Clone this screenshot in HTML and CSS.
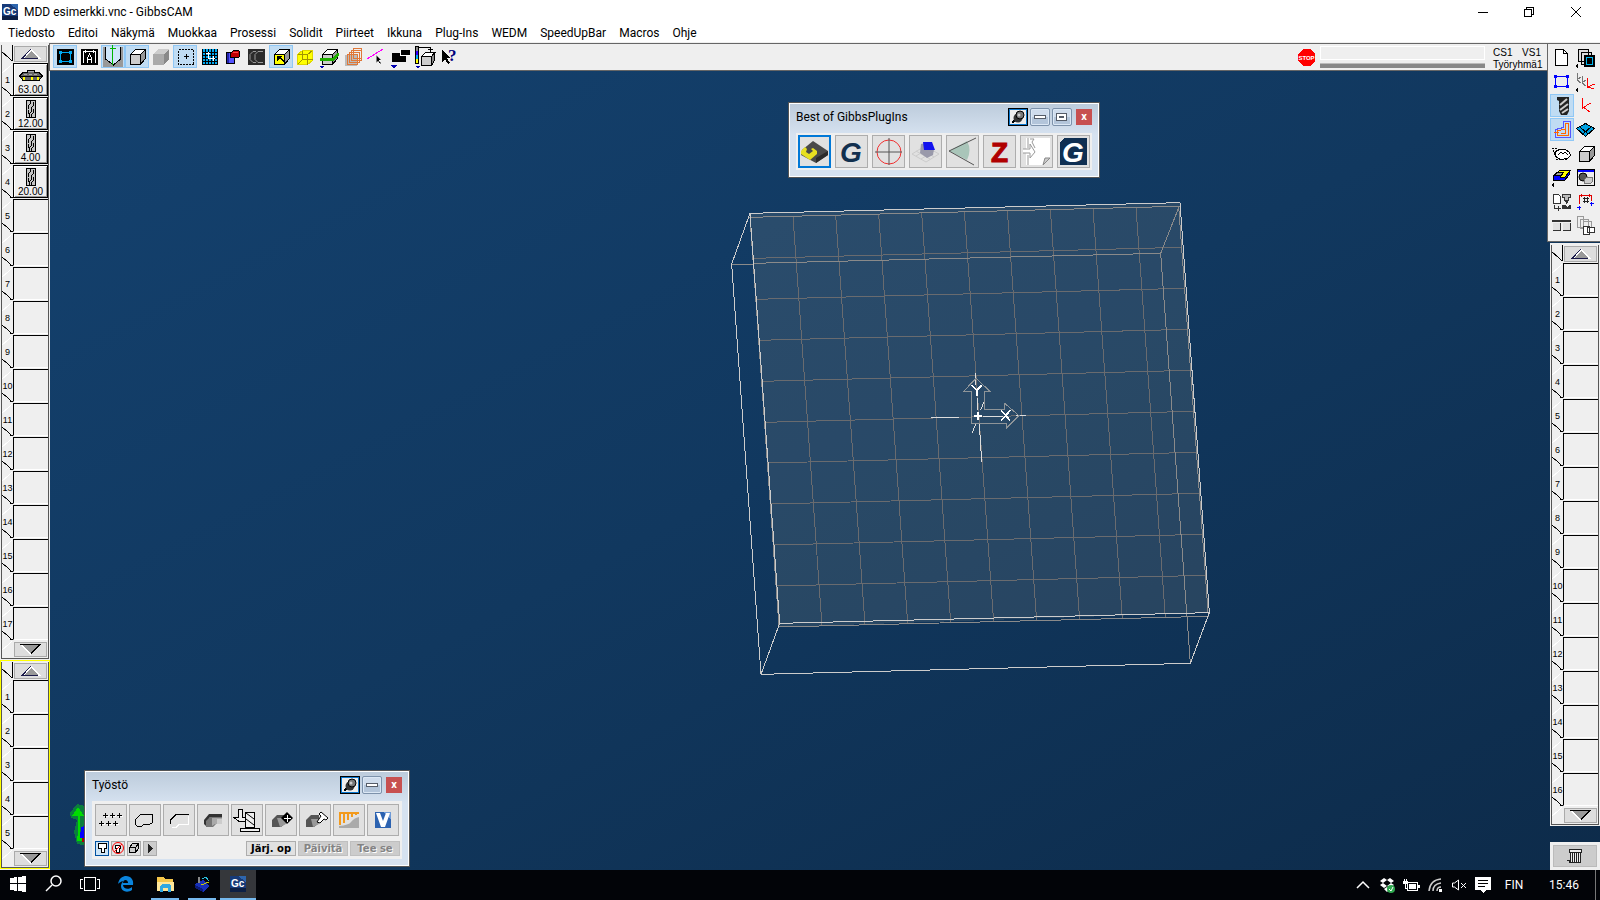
FILE: index.html
```html
<!DOCTYPE html>
<html lang="fi">
<head>
    <meta charset="UTF-8">
    <meta name="viewport" content="width=device-width, initial-scale=1.0">
    <title>MDD esimerkki.vnc - GibbsCAM</title>
    <link rel="stylesheet" href="styles.css">
</head>
<body>
    <!-- SHARED ICONS -->
    <svg class="sprite" aria-hidden="true">
      <symbol id="cube" viewBox="0 0 24 23">
        <path fill="#fff" stroke="#000" d="M5.500 9.500l5-5h10l-5 5z"/>
        <path fill="#999" stroke="#000" d="M15.500 9.500l5-5v9l-5 6z"/>
        <path fill="#ccc" stroke="#000" d="M5.500 9.500h10v10h-10z"/>
      </symbol>
      <symbol id="up" viewBox="0 0 20 11">
        <path fill="#fff" d="M10 0L0 10h20z"/>
        <path fill="#999" d="M10 2L3 9h14z"/>
        <path fill="none" stroke="#1b1b4a" d="M10 0L1 9.500h16"/>
      </symbol>
      <symbol id="down" viewBox="1 0 20 11">
        <path fill="#fff" d="M0 1h20L10 11z"/>
        <path fill="#999" d="M2 1h16l-8 8z"/>
        <path fill="none" stroke="#000" d="M0 .500h20L11 9.500"/>
      </symbol>
      <symbol id="facemill" viewBox="0 0 26 13">
        <path fill="#666" stroke="#000" d="M9.500 1.500h7v2h4l4 4-3 4h-17l-3-4 4-4h4z"/>
        <path stroke="#aaa" d="M10 2.500h6M6 5.500h3M11 5.500h3M16 5.500h3"/>
        <path stroke="#000" d="M1 7.500h24"/>
        <path fill="#ff0" d="M5 8h2v3H5zM13 8h2v3h-2zM19 8h2v3h-2z"/>
      </symbol>
      <symbol id="endmill" viewBox="0 0 10 18">
        <path fill="#c4c4c4" stroke="#000" d="M.500 .500h9v17h-9z"/>
        <path fill="none" stroke="#000" d="M4.500 1v2l-2 3v3M7.500 2v3l-2 3v3l-2 3v3M7.500 9v3l-2 3v2M2.500 10v4"/>
      </symbol>
      <symbol id="pin" viewBox="0 0 18 16">
        <path stroke="#000" stroke-width="2" d="M3 14l4-4"/>
        <circle class="smooth" cx="9" cy="9" r="4.500" fill="#333"/>
        <circle class="smooth" cx="11" cy="6" r="4" fill="#777" stroke="#000"/>
        <circle class="smooth" cx="10" cy="6" r="1.500" fill="#ccc"/>
      </symbol>
      <symbol id="gc" viewBox="0 0 16 16">
        <path fill="#173a78" d="M0 0h16v16H0z"/>
        <path fill="#2e66ad" d="M8 0h8v6z"/>
        <path fill="#0c1f44" d="M0 12h16v4H0z"/>
        <text x="1" y="11" class="gc-text">Gc</text>
      </symbol>
    </svg>

    <header class="titlebar">
      <svg class="titlebar__logo" width="16" height="16"><use href="#gc"/></svg>
      <h1 class="titlebar__title">MDD esimerkki.vnc - GibbsCAM</h1>
      <div class="titlebar__controls">
        <button class="titlebar__button" aria-label="Minimize"><svg width="12" height="12"><path d="M1 6.500h10"/></svg></button>
        <button class="titlebar__button" aria-label="Restore"><svg width="12" height="12"><path d="M1.500 3.500h7v7h-7zM3.500 3V1.500h7v7H9"/></svg></button>
        <button class="titlebar__button" aria-label="Close"><svg class="smooth" width="12" height="12"><path d="M1 1l10 10M11 1L1 11"/></svg></button>
      </div>
    </header>

    <nav class="menubar" aria-label="main menu">
      <button class="menubar__item">Tiedosto</button>
      <button class="menubar__item">Editoi</button>
      <button class="menubar__item">Näkymä</button>
      <button class="menubar__item">Muokkaa</button>
      <button class="menubar__item">Prosessi</button>
      <button class="menubar__item">Solidit</button>
      <button class="menubar__item">Piirteet</button>
      <button class="menubar__item">Ikkuna</button>
      <button class="menubar__item">Plug-Ins</button>
      <button class="menubar__item">WEDM</button>
      <button class="menubar__item">SpeedUpBar</button>
      <button class="menubar__item">Macros</button>
      <button class="menubar__item">Ohje</button>
    </nav>

    <div class="workspace">
      <!-- TOOLS AND OPERATIONS -->
      <aside class="side">
        <div class="list">
          <div class="list__inner">
            <div class="list__scroll list__scroll--up"><button class="list__arrow" aria-label="Up"><svg width="20" height="11"><use href="#up"/></svg></button></div>
            <ol class="list__tiles" data-count="17" data-tools="facemill:63.00 endmill:12.00 endmill:4.00 endmill:20.00"></ol>
            <div class="list__scroll list__scroll--down"><button class="list__arrow" aria-label="Down"><svg width="20" height="11"><use href="#down"/></svg></button></div>
          </div>
        </div>
        <div class="list list--active">
          <div class="list__inner">
            <div class="list__scroll list__scroll--up"><button class="list__arrow" aria-label="Up"><svg width="20" height="11"><use href="#up"/></svg></button></div>
            <ol class="list__tiles" data-count="5"></ol>
            <div class="list__scroll list__scroll--down"><button class="list__arrow" aria-label="Down"><svg width="20" height="11"><use href="#down"/></svg></button></div>
          </div>
        </div>
      </aside>

      <main class="center">
        <div class="toolbar">
          <button class="tool tool--on" aria-label="Workgroup"><svg viewBox="0 0 24 23"><path fill="#000" d="M4 4h17v16H4z"/><path fill="none" stroke="#00a8f0" d="M7.500 7.500h10v9h-10z"/><path fill="#00a8f0" d="M6 6h3v3H6zM16 6h3v3h-3zM6 15h3v3H6zM16 15h3v3h-3z"/></svg></button>
          <button class="tool" aria-label="Labels"><svg viewBox="0 0 24 23"><path fill="#000" d="M4 4h17v16H4z"/><path fill="none" stroke="#fff" d="M6.500 18V6.500h12V18M8.500 5v3M16.500 5v3M10.500 18v-5l2-4 2 4v5M10 14.500h5"/></svg></button>
          <button class="tool tool--on" aria-label="Tool view"><svg viewBox="0 0 24 23"><path fill="#999" d="M2 2h20v20H2z"/><path fill="#cfe6fa" stroke="#000" d="M4.500 2v12l8 6 7-6V2"/><path fill="none" stroke="#00b400" d="M11.500 0v20M9 3.500h6"/></svg></button>
          <button class="tool tool--on" aria-label="Stock"><svg><use href="#cube"/></svg></button>
          <button class="tool" aria-label="Shaded"><svg viewBox="0 0 24 23"><path fill="#ccc" d="M4 9l5-5h11l-5 5z"/><path fill="#888" d="M15 9l5-5v10l-5 6z"/><path fill="#aaa" d="M4 9h11v11H4z"/></svg></button>
          <button class="tool tool--on" aria-label="Selection"><svg viewBox="0 0 24 23"><path fill="none" stroke="#000" stroke-dasharray="2 1" d="M5.500 4.500h15v15h-15z"/><path stroke="#000" d="M11 11.500h5M13.500 9v5"/></svg></button>
          <button class="tool" aria-label="Grid"><svg viewBox="0 0 24 23"><path fill="#00a8f0" d="M5 4h16v16H5z"/><path stroke="#000" d="M5.500 4v16M8.500 4v16M11.500 4v16M14.500 4v16M17.500 4v16M20.500 4v16M5 7.500h16M5 10.500h16M5 13.500h16M5 16.500h16M5 19.500h16"/><path fill="none" stroke="#fff" d="M9 8.500h4M11.500 7v6.500h6M16.500 11v5"/></svg></button>
          <button class="tool" aria-label="Sheet"><svg viewBox="0 0 24 23"><path fill="#55f" stroke="#000" d="M5.500 7.500h8v11h-8z"/><path fill="#22a" d="M6 8h2v10H6z"/><path fill="#c00000" stroke="#000" d="M9.500 12.500v-4l3-3h5l1 1v5l-1 1z"/><path stroke="#f44" d="M12 7.500h5"/></svg></button>
          <button class="tool" aria-label="Section"><svg viewBox="0 0 24 23"><path fill="#2b2b2b" d="M3 4h17v16H3z"/><path class="smooth" fill="none" stroke="#999" d="M18 6.500h-5l-3 3v5l3 3h5M11 6.500H8l-3 3v5l3 3h3"/></svg></button>
          <button class="tool tool--on" aria-label="Faces"><svg viewBox="0 0 24 23"><use href="#cube"/><path fill="#ff0" stroke="#000" d="M5.500 9.500h10v10h-10z"/><path fill="#000" d="M8 11h5l-1 2 3 3-1 1-3-3-3 2z"/></svg></button>
          <button class="tool" aria-label="Wireframe"><svg viewBox="0 0 24 23"><path fill="#ff0" stroke="#e0d800" d="M4.500 9.500l5-4h10v10l-5 4h-10z"/><path fill="none" stroke="#a09400" d="M4.500 9.500h10v10M14.500 9.500l5-4M9.500 5.500v9h10M4.500 19.500l5-5"/></svg></button>
          <button class="tool" aria-label="Slice"><svg viewBox="0 0 24 23"><use href="#cube"/><path fill="#20b000" d="M3 13h12l6-5h1v3l-6 5H3z"/><path fill="#0000b0" d="M2 21h5l-2 3z"/></svg></button>
          <button class="tool" aria-label="Layers"><svg viewBox="0 0 24 23"><path fill="#bbb" d="M4 10h12v11H4z"/><path fill="none" stroke="#e07838" d="M6.500 9.500h10v10h-10zM8.500 7.500h10v10h-10zM10.500 5.500h10v10h-10zM12.500 3.500h8v10h-8z"/></svg></button>
          <button class="tool" aria-label="Edge"><svg viewBox="0 0 24 23"><path stroke="#f0f" d="M2 14L18 4"/><path fill="#000" stroke="#fff" stroke-width=".500" d="M11 10l5 5h-2l2 3-1 1-2-3-2 2z"/></svg></button>
          <button class="tool" aria-label="Bodies"><svg viewBox="0 0 24 23"><path fill="#000" d="M3 8h8v1h6v8H3zM12 5h9v5h-9z"/><path fill="none" stroke="#fff" d="M11.500 4v6.500H21"/><path fill="#0000b0" d="M1 20h7l-3 4z"/></svg></button>
          <button class="tool" aria-label="Colours"><svg viewBox="0 0 24 23"><path fill="#888" stroke="#000" d="M2.500 1.500h3v17h-3z"/><path fill="#30f" d="M3 6h2v4H3z"/><path fill="#00b0f0" d="M3 10h2v4H3z"/><path fill="#ff0" d="M3 14h2v4H3z"/><path fill="none" stroke="#000" d="M6 2.500h11v4M15 4.500h5"/><path fill="#fff" stroke="#000" d="M8.500 11.500l4-4h10l-4 4z"/><path fill="#888" stroke="#000" d="M18.500 11.500l3-4v8l-3 5z"/><path fill="#ccc" stroke="#000" d="M8.500 11.500h10v9h-10z"/><path fill="#0000b0" d="M2 21h5l-2 3z"/></svg></button>
          <button class="tool" aria-label="Help"><svg viewBox="0 0 24 23"><path fill="#000" d="M5 4l8 9h-3l3 5-2 1-3-5-3 3z"/><text x="11" y="16" class="help-mark">?</text></svg></button>

          <div class="status">
            <button class="status__stop" aria-label="STOP"><svg width="17" height="17" viewBox="0 0 17 17"><path fill="#f00" d="M5 0h7l5 5v7l-5 5H5l-5-5V5z"/><text x="8.500" y="11" text-anchor="middle" class="stop-text">STOP</text></svg></button>
            <div class="status__bars">
              <div class="status__field"></div>
              <div class="status__line"></div>
            </div>
            <div class="status__labels">
              <span>CS1</span><span class="status__set">VS1</span>
              <span class="status__group">Työryhmä1</span>
            </div>
          </div>
        </div>

        <div class="stage">
          <svg class="stage__part" viewBox="0 0 1500 1500" width="500" height="500">
            <path class="part__face" d="M90 70L1380 38L1468 1268L177 1311z"/>
            <path class="part__grid" d="M219 79L306 1308M347 75L435 1305M476 72L563 1301M605 69L692 1298M733 66L821 1295M862 62L950 1292M991 59L1079 1289M1119 56L1207 1285M1248 52L1336 1282
              M99 205L1385 172M107 328L1394 295M116 451L1403 418M125 574L1412 541M134 697L1421 664M142 819L1429 787M151 942L1438 910M160 1065L1447 1033M168 1188L1456 1156"/>
            <path class="part__hidden" d="M90 82L1376 49L1465 1279L177 1311zM100 220L1322 190L1411 1420M1378 48L1322 190M35 223H100"/>
            <path class="part__edge" d="M90 70L1380 38L1468 1268L179 1300zM90 70L35 222L123 1453L1411 1420L1468 1268M179 1300L123 1453"/>
            <path class="part__axes" d="M633 682H717M888 677H918M766 548L768 585M772 625V660M778 700L785 815M792 635L782 660M768 700L757 728M790 680H850"/>
            <path class="part__arrows" d="M755 700V604H731L768 565L810 604H794V658H854V640L897 677L858 716V700z"/>
            <path class="part__origin" d="M762 678H787M775 666V690"/>
            <path class="part__letter" d="M755 586L770 601L785 586M770 600V618M843 661L871 692M871 661L843 692"/>
          </svg>

          <svg class="stage__gnomon" width="26" height="46">
            <path fill="#0f0" opacity=".35" d="M1 10L8 1l8 2 4 12-3 5 7 14-4 9-12-2-3-12 3-12-6-2z"/>
            <path fill="#0d0" d="M3 13l6-9 6 9h-4v15l5 10H8l1-10V13z"/>
            <path fill="#00f" d="M12 24l8-2v16l-9-3z"/>
            <path fill="#a00" d="M13 35h7v4h-7z"/>
          </svg>

          <section class="palette palette--plugins">
            <header class="palette__head">
              <h2 class="palette__title">Best of GibbsPlugIns</h2>
              <button class="palette__pin" aria-label="Pin"><svg width="18" height="16"><use href="#pin"/></svg></button>
              <button class="palette__control" aria-label="Minimize"><svg width="12" height="8"><path d="M.500 2.500h11v3H.500z"/></svg></button>
              <button class="palette__control" aria-label="Maximize"><svg width="12" height="8"><path d="M.500 .500h10v7H.500zM3.500 3.500h4v1h-4z"/></svg></button>
              <button class="palette__close" aria-label="Close">x</button>
            </header>
            <div class="palette__body palette__row">
              <button class="plugin plugin--on" aria-label="Pocket"><svg class="smooth" viewBox="0 0 33 33"><path fill="#4a4a4a" d="M4 15L15 6l15 10v4L18 28 3 20z"/><path fill="#2b2b2b" d="M18 23l12-7v4l-12 8z"/><path fill="#e8e020" d="M3 16l4-4 2 2-1 3 3 2 4-3-2-2 2-1 4 3v3l-7 6-9-6z"/></svg></button>
              <button class="plugin" aria-label="Gibbs"><svg viewBox="0 0 33 33"><text x="5" y="27" class="g-text">G</text></svg></button>
              <button class="plugin" aria-label="Target"><svg class="smooth" viewBox="0 0 33 33"><circle cx="17" cy="17" r="12" fill="none" stroke="#f03030"/><path stroke="#555" d="M3 17h27M17 3v27"/></svg></button>
              <button class="plugin" aria-label="Part cube"><svg class="smooth" viewBox="0 0 33 33"><path fill="none" stroke="#ccc" d="M3 19l13-8 14 8-13 8zM7 16l14 8M12 14l13 8M7 21l13-8M12 24l13-8"/><path fill="#99a" d="M12 9l-1 9 7 5 6-3 1-6-3-7z"/><path fill="#11e" d="M14 7h9l3 8h-11z"/></svg></button>
              <button class="plugin" aria-label="Angle"><svg class="smooth" viewBox="0 0 33 33"><path fill="#a9c5b9" d="M3 16L21 6q5 9 0 19z"/><path fill="none" stroke="#555" d="M30 3L3 16l25 14"/></svg></button>
              <button class="plugin" aria-label="Z"><svg viewBox="0 0 33 33"><text x="8" y="27" class="z-text">Z</text></svg></button>
              <button class="plugin" aria-label="Sheet arrows"><svg class="smooth" viewBox="0 0 33 33"><path fill="#fff" d="M6 3h24v20l-7 7H6z"/><path fill="#ccc" stroke="#888" d="M30 23h-5l-2 7z"/><path fill="#fff" stroke="#999" d="M8 3v10M8 20v10M3 14h7V9l5 8-5 6v-5H3M10 4h4l-2 3 3 6"/></svg></button>
              <button class="plugin" aria-label="Gibbs large"><svg viewBox="0 0 33 33"><path fill="#0f2f52" d="M7 3h23v27H3V7z"/><text x="5" y="27" class="g-text g-text--white">G</text></svg></button>
            </div>
          </section>

          <section class="palette palette--machining">
            <header class="palette__head">
              <h2 class="palette__title">Työstö</h2>
              <button class="palette__pin" aria-label="Pin"><svg width="18" height="16"><use href="#pin"/></svg></button>
              <button class="palette__control" aria-label="Minimize"><svg width="12" height="8"><path d="M.500 2.500h11v3H.500z"/></svg></button>
              <button class="palette__close" aria-label="Close">x</button>
            </header>
            <div class="palette__body">
              <div class="palette__row palette__row--tight">
                <button class="plugin" aria-label="Holes"><svg viewBox="0 0 32 32"><path stroke="#fff" d="M9 12.500h5M16 12.500h5M23 12.500h5M5 20.500h5M12 20.500h5M19 20.500h5"/><path stroke="#000" d="M8 11.500h5M10.500 9v5M15 11.500h5M17.500 9v5M22 11.500h5M24.500 9v5M4 19.500h5M6.500 17v5M11 19.500h5M13.500 17v5M18 19.500h5M20.500 17v5"/></svg></button>
                <button class="plugin" aria-label="Contour"><svg viewBox="0 0 32 32"><path fill="none" stroke="#000" d="M6.500 15.500l5-5h12v8l-3 2h-6l-2 2h-4l-2-2z"/></svg></button>
                <button class="plugin" aria-label="Edge contour"><svg viewBox="0 0 32 32"><path fill="none" stroke="#fff" d="M25.500 12v8h-9l-3 3h-5"/><path fill="none" stroke="#000" d="M7.500 20v-4l6-6h12"/></svg></button>
                <button class="plugin" aria-label="Pocketing"><svg class="smooth" viewBox="0 0 32 32"><path fill="#333" d="M7 16l5-6h13v3H13l-4 9-2-2z"/><path fill="#777" d="M9 17l4-4h12v7h-6l-3 3H9z"/><path fill="#aaa" d="M15 14h10v6h-7l-3 2z"/><path fill="#ccc" d="M20 15h5v5h-5z"/></svg></button>
                <button class="plugin" aria-label="Thread"><svg viewBox="0 0 32 32"><path fill="#eee" stroke="#000" d="M7.500 5.500h4v8h3v4H8l-5-4h4.500zM14.500 8.500h9v15h-9zM9.500 24.500h19v3h-19z"/><path class="smooth" stroke="#000" d="M15 9l8 6M15 15l8 6"/></svg></button>
                <button class="plugin" aria-label="Move"><svg class="smooth" viewBox="0 0 32 32"><path fill="#555" d="M7 16l5-5h9v8l-5 4H7z"/><path fill="#999" d="M12 14h9v6l-6 3z"/><path fill="#000" d="M22 8l6 6-6 6-6-6z"/><path stroke="#fff" d="M19 14.500h7M22.500 11v7"/></svg></button>
                <button class="plugin" aria-label="Mill"><svg class="smooth" viewBox="0 0 32 32"><path fill="#555" d="M7 16l5-5h8v8l-5 4H7z"/><path fill="#999" d="M12 15h8v5l-6 3z"/><path fill="#fff" stroke="#000" d="M18 18l4-6-2-2 2-2 7 6-2 2-2-1-4 4z"/></svg></button>
                <button class="plugin" aria-label="Surface"><svg viewBox="0 0 32 32"><path class="smooth" fill="#aaa" d="M6 24v-2q10-1 12-4 3-4 8-5v11z"/><path stroke="#f39a1c" stroke-width="2" d="M7 8v13M11 8v11M15 8v8M19 8v5M23 8v3M6 9h20"/></svg></button>
                <button class="plugin" aria-label="VoluMill"><svg viewBox="0 0 32 32"><path fill="#2c62b0" d="M8 8h16v16H8z"/><path fill="#6f9bd8" d="M16 8h8v8z"/><path class="smooth" fill="#fff" d="M9 9h4l3 8 3-8h4l-5 14h-4z"/></svg></button>
              </div>
              <div class="palette__row palette__row--actions">
                <button class="mini mini--on" aria-label="Holder"><svg viewBox="0 0 14 15"><path fill="#fff" stroke="#000" d="M3.500 2.500h8v5h-2v4h-3v-4h-3z"/></svg></button>
                <button class="mini" aria-label="No holder"><svg viewBox="0 0 14 15"><path fill="#fff" stroke="#000" d="M4.500 4.500h5v3h-1v4h-3v-4h-1z"/><circle class="smooth" cx="7" cy="7" r="5.500" fill="none" stroke="#f00"/><path class="smooth" stroke="#f00" d="M3 11l8-8"/></svg></button>
                <button class="mini" aria-label="Solid"><svg viewBox="0 0 14 15"><path fill="#ccc" stroke="#000" d="M2.500 6.500l3-4h6v5l-3 4h-6zM2.500 6.500h6v5M8.500 6.500l3-4"/></svg></button>
                <button class="mini mini--dark" aria-label="More"><svg viewBox="0 0 14 15"><path fill="#222" d="M5 3v9l5-4.500z"/></svg></button>
                <span class="palette__spacer"></span>
                <button class="action">Järj. op</button>
                <button class="action" disabled>Päivitä</button>
                <button class="action" disabled>Tee se</button>
              </div>
            </div>
          </section>
        </div>
      </main>

      <aside class="side side--right">
        <div class="tools">
          <button class="tool" aria-label="New"><svg viewBox="0 0 24 23"><path fill="#fff" stroke="#000" d="M5.500 3.500h8l4 4v12h-12z"/><path fill="none" stroke="#000" d="M13.500 3.500v4h4"/></svg></button>
          <button class="tool" aria-label="Workgroups"><svg viewBox="0 0 24 23"><path fill="#ddd" stroke="#000" d="M4.500 3.500h10v12h-10zM7.500 6.500h10v12h-10z"/><path fill="#000" d="M10 9h11v12H10z"/><path fill="none" stroke="#00b8f0" d="M12.500 11.500h6v7h-6z"/><path fill="#000" d="M1 20l3-3v6z"/></svg></button>
          <button class="tool" aria-label="Geometry"><svg viewBox="0 0 24 23"><path fill="none" stroke="#00f" d="M5.500 6.500h12v10h-12z"/><path fill="#00f" d="M4 5h3v3H4zM16 5h3v3h-3zM4 15h3v3H4zM16 15h3v3h-3z"/></svg></button>
          <button class="tool" aria-label="Coordinate systems"><svg viewBox="0 0 24 23"><path fill="none" stroke="#777" d="M3.500 3v7l3 3M4 9l3-2M8.500 6v7l3 3M9 12l3-2"/><path fill="none" stroke="#f00" d="M13.500 8v9l7-3M14 17l6 2"/><path fill="#000" d="M1 20l3-3v6z"/></svg></button>
          <button class="tool tool--on" aria-label="Tool"><svg class="smooth" viewBox="0 0 24 23"><path fill="#222" d="M7 3h12v14l-2 4h-6l-2-4V7L7 6z"/><path stroke="#ccc" stroke-width="2" d="M10 11l7-6M10 16l8-6M12 19l6-4"/></svg></button>
          <button class="tool" aria-label="CS"><svg viewBox="0 0 24 23"><path fill="none" stroke="#f00" d="M8.500 4v10l8-5M9 13l7 5"/></svg></button>
          <button class="tool tool--on" aria-label="Machining"><svg viewBox="0 0 24 23"><path fill="none" stroke="#55f" d="M5.500 11.500l8-2v-6h7v16h-15z"/><path fill="none" stroke="#f60" d="M4 14.500h5M7.500 17.500v-5l8-1v-6h3v12zM10.500 15.500h5v-6"/></svg></button>
          <button class="tool" aria-label="Surfaces"><svg viewBox="0 0 24 23"><path fill="#00a0e0" stroke="#000" d="M2.500 10.500l9-5 9 5-9 8z"/><path fill="none" stroke="#000" d="M6 9l8 7M17 9l-8 7"/></svg></button>
          <button class="tool" aria-label="Render"><svg viewBox="0 0 24 23"><path fill="#fff" stroke="#000" d="M5.500 9.500l4-2h6l4 3 1 3-3 3-6 1-5-2-2-4z"/><path fill="none" stroke="#000" stroke-dasharray="2 1" d="M2 6.500h5l3 2M3 8l3 4M6 17.500h12"/><path fill="none" stroke="#000" d="M8 13l3-3 2 2 2-2 3 3"/></svg></button>
          <button class="tool" aria-label="Solids"><svg><use href="#cube"/></svg></button>
          <button class="tool" aria-label="Sheets"><svg viewBox="0 0 24 23"><path fill="#ff0" stroke="#000" d="M3.500 9.500l6-5h11l-6 7h-5z"/><path fill="#999" stroke="#000" d="M3.500 9.500l4-3h6l-3 4z"/><path fill="#00f" stroke="#000" d="M3.500 9.500h7v2h4l5-6v3l-5 6h-11z"/><path fill="#000" d="M1 19l3-3v6z"/></svg></button>
          <button class="tool" aria-label="Simulation"><svg viewBox="0 0 24 23"><path fill="#eee" stroke="#000" d="M3.500 3.500h17v16h-17z"/><path fill="#00f" d="M4 4h16v2H4z"/><circle class="smooth" cx="9" cy="11" r="4" fill="#555" stroke="#000"/><path fill="#ccc" stroke="#777" d="M10.500 13.500l2-2h6v4l-2 2h-6z"/></svg></button>
          <button class="tool" aria-label="Post"><svg viewBox="0 0 24 23"><path fill="#fff" stroke="#333" d="M3.500 4.500h5l2 2v7h-7z"/><path fill="none" stroke="#333" d="M4.500 15v3h6M8.500 16v5"/><path fill="#bbb" stroke="#333" d="M12.500 4.500h8v3h-2v3h-4v-3h-2z"/><path fill="#333" d="M12 15h3l2 2 2-2h2v4h-9zM15 11h3l-1 4z"/></svg></button>
          <button class="tool" aria-label="Numbering"><svg viewBox="0 0 24 23"><path fill="none" stroke="#e00000" d="M5.500 14V5.500h12V11M7.500 4v3M15.500 4v3"/><path stroke="#222" d="M9 8.500h6M9 11.500h6M10.500 7v6M13.500 7v6"/><path stroke="#00f" d="M3 17.500h4M5.500 16v4M16 13.500h4M17.500 12v4"/></svg></button>
          <button class="tool" aria-label="Compare"><svg viewBox="0 0 24 23"><path fill="#e0e0e0" d="M3 9h8v7H3zM13 9h8v7h-8z"/><path fill="none" stroke="#333" d="M3 16.500h7.500V9M13 16.500h7.500V9M2 7.500h19"/><path stroke="#333" d="M2 6.500h19"/></svg></button>
          <button class="tool" aria-label="Copies"><svg viewBox="0 0 24 23"><path fill="#eee" stroke="#999" d="M3.500 2.500h6v11h-6zM6.500 5.500h8v9h-8zM9.500 7.500h8v9h-8z"/><path fill="#fff" stroke="#333" d="M9.500 12.500h6v8h-6zM13.500 13.500h7v5h-7z"/></svg></button>
        </div>
        <div class="list">
          <div class="list__inner">
            <div class="list__scroll list__scroll--up"><button class="list__arrow" aria-label="Up"><svg width="20" height="11"><use href="#up"/></svg></button></div>
            <ol class="list__tiles" data-count="16"></ol>
            <div class="list__scroll list__scroll--down"><button class="list__arrow" aria-label="Down"><svg width="20" height="11"><use href="#down"/></svg></button></div>
          </div>
        </div>
        <div class="trash">
          <button class="trash__button" aria-label="Trash"><svg width="16" height="15"><path fill="#eee" stroke="#222" d="M3.500 3.500h10v10h-10zM2.500 .500h12v3h-12z"/><path fill="none" stroke="#222" d="M5.500 4v9M7.500 4v9M9.500 4v9M11.500 4v9M0 11.500h2v2h2"/></svg></button>
        </div>
      </aside>
    </div>

    <!-- TASKBAR -->
    <footer class="taskbar">
      <button class="task" aria-label="Start"><svg width="16" height="16"><path fill="#fff" d="M0 2l7-1v6H0zM8 1l8-1v7H8zM0 8h7v7l-7-1zM8 8h8v8l-8-1z"/></svg></button>
      <button class="task" aria-label="Search"><svg class="smooth" width="18" height="18"><circle cx="11" cy="6" r="5" fill="none" stroke="#fff" stroke-width="1.500"/><path stroke="#fff" stroke-width="1.500" d="M7 10l-6 6"/></svg></button>
      <button class="task" aria-label="Task view"><svg width="20" height="16"><path fill="none" stroke="#fff" d="M4.500 1.500h11v13h-11zM3 3.500H.500v9H3M17 3.500h2.500v9H17"/></svg></button>
      <button class="task" aria-label="Edge"><svg class="smooth" width="16" height="16"><path fill="#0a84dc" d="M0 8C1 2 5 0 8 0c5 0 8 4 7 9H5c0 4 6 5 9 2v3c-4 3-11 2-11-4 0-2 1-4 3-5-3 0-5 2-6 3zm5-1h5c0-4-5-4-5 0z"/></svg></button>
      <button class="task task--open" aria-label="Explorer"><svg width="17" height="15"><path fill="#f5c64a" d="M0 0h6l2 2h8v12H0z"/><path fill="#ffe79a" d="M0 5h17v9H0z"/><path fill="#30a8e0" d="M3 9l2-2h7l2 2v6h-3v-4H6v4H3z"/></svg></button>
      <button class="task task--open" aria-label="Control"><svg width="17" height="16"><path fill="#1630b8" d="M1 8l8-4 7 6-7 6-8-4z"/><path fill="#0a1a78" d="M1 9l8 4v3l-8-4z"/><path stroke="#c8c800" d="M7 9l8-3"/><path stroke="#888" stroke-width="2" d="M5 1v6"/><path fill="none" stroke="#28c0e0" d="M8 3l4-2 3 4"/></svg></button>
      <button class="task task--current" aria-label="GibbsCAM"><svg width="16" height="16"><use href="#gc"/></svg></button>

      <div class="tray">
        <button class="tray__item" aria-label="Show hidden"><svg class="smooth" width="14" height="8"><path fill="none" stroke="#fff" stroke-width="1.500" d="M1 7l6-6 6 6"/></svg></button>
        <button class="tray__item" aria-label="Dropbox"><svg class="smooth" width="15" height="15"><path fill="#fff" d="M4 0l3 2-4 3-3-2zM10 0l4 3-3 2-4-3zM3 5l4 3-3 2-4-3zM11 5l3 2-4 3-3-2zM4 11l3-2 3 2-3 3z"/><circle cx="11" cy="11" r="4" fill="#2fa84f"/><path fill="none" stroke="#fff" d="M9 11l2 2 2-4"/></svg></button>
        <button class="tray__item" aria-label="Battery"><svg width="17" height="13"><path fill="none" stroke="#fff" d="M4.500 3.500h10v8h-10zM1.500 0v3M3.500 0v3M2.500 5v4h2"/><path fill="#fff" d="M0 2h5v3H0zM6 5h7v5H6zM15 6h2v3h-2z"/></svg></button>
        <button class="tray__item" aria-label="Network"><svg class="smooth" width="14" height="14"><path fill="none" stroke="#ccc" stroke-width="1.500" d="M1 13Q2 2 13 1M5 13q0-7 8-8M9 13q0-4 4-4"/><path fill="#fff" d="M11 11h3v3h-3z"/></svg></button>
        <button class="tray__item" aria-label="Volume"><svg class="smooth" width="15" height="12"><path fill="none" stroke="#fff" d="M.500 4h2l4-3v10l-4-3h-2zM9 4l5 5M14 4L9 9"/></svg></button>
        <button class="tray__item" aria-label="Notifications"><svg width="16" height="16"><path fill="#fff" d="M0 0h16v13h-5l-3 3-3-3H0z"/><path stroke="#000" d="M3 3.500h10M3 6.500h10M3 9.500h7"/></svg></button>
        <button class="tray__text">FIN</button>
        <button class="tray__text tray__text--clock">15:46</button>
      </div>
    </footer>

    <script>
        // BUILD NUMBERED TILES
        document.querySelectorAll('.list__tiles').forEach(list => {
            const tools = (list.dataset.tools || '').split(' ').filter(Boolean);

            for (let i = 0; i < Number(list.dataset.count); i++) {
                const tile = document.createElement('li');
                tile.className = 'tile';
                tile.innerHTML = `<span class="tile__tab">${i + 1}</span><button class="tile__box" aria-label="${i + 1}"></button>`;

                if (tools[i]) {
                    const [icon, size] = tools[i].split(':');
                    const box = tile.querySelector('.tile__box');
                    box.classList.add('tile__box--tool');
                    box.innerHTML = `<svg class="tile__icon"><use href="#${icon}"/></svg><span>${size}</span>`;
                }
                list.append(tile);
            }
        });
    </script>
</body>
</html>
```
FILE: styles.css
```css
:root {
    --panel: #efefef;
    --line: #666;
    --on-bg: #c0dcf3;
    --on-border: #90c8f6;
    --ui-font: Roboto, "Open Sans", sans-serif;
    --small-font: "Liberation Sans", Arial, sans-serif;
}

* {
    box-sizing: border-box;
}

body {
    margin: 0;
    height: 100vh;
    display: flex;
    flex-direction: column;
    overflow: hidden;
    background-color: white;
    color: black;
    font-family: var(--ui-font);
    font-size: 12px;
}

button {
    margin: 0;
    padding: 0;
    border: 0;
    background: transparent;
    color: inherit;
    font: inherit;
}

svg {
    display: block;
    overflow: visible;
    shape-rendering: crispEdges;
}
symbol {
    overflow: visible;
}
.smooth {
    shape-rendering: auto;
}
.sprite {
    position: absolute;
    width: 0;
    height: 0;
}

/* svg lettering */
.gc-text {
    font: bold 10px var(--small-font);
    fill: white;
}
.help-mark {
    font: bold 17px "Liberation Serif", serif;
    fill: #00007c;
}
.stop-text {
    font: bold 6px var(--small-font);
    fill: white;
}
.g-text {
    font: italic bold 28px var(--small-font);
    fill: #12304f;
}
.g-text--white {
    fill: white;
}
.z-text {
    font: bold 28px var(--small-font);
    fill: #b00000;
    stroke: #b00000;
}

.titlebar {
    display: flex;
    align-items: center;
    height: 23px;
    padding-left: 2px;
}
.titlebar__title {
    margin: 0 0 0 6px;
    font-size: 12px;
    font-weight: normal;
}
.titlebar__controls {
    display: flex;
    margin-left: auto;
}
.titlebar__button {
    display: flex;
    align-items: center;
    justify-content: center;
    width: 46px;
    height: 22px;
    fill: none;
    stroke: black;
}
.titlebar__button:last-child {
    width: 48px;
}

.menubar {
    display: flex;
    gap: 1px;
    height: 20px;
    padding: 0 2px;
    border-bottom: 1px solid var(--panel);
}
.menubar__item {
    padding: 0 6px;
}
.menubar__item:hover {
    background-color: var(--on-bg);
}

.workspace {
    flex: 1;
    min-height: 0;
    display: flex;
    background: linear-gradient(to bottom right, #144270 0%, #11385f 50%, #0d2b4a 100%);
}

.side {
    display: flex;
    flex-direction: column;
    align-items: flex-end;
    background-color: var(--panel);
}
.side--right {
    gap: 1px;
    background-color: transparent;
}

/* numbered lists */
.list {
    width: 50px;
    padding-top: 1px;
    border: 1px solid var(--panel);
    background-color: var(--panel);
}
.list--active {
    border-color: #ff0;
}
.list__inner {
    border: 1px solid #555;
    border-top: 0;
}
.list__scroll {
    display: flex;
    justify-content: flex-end;
    padding: 1px;
}
.list__scroll--up {
    height: 18px;
    background:
        linear-gradient(to top right, transparent 47%, #000 48%, #000 54%, transparent 55%) 0 7px / 10px 9px no-repeat,
        linear-gradient(#000, #000) 10px 0 / 1px 16px no-repeat;
}
.list__scroll--down {
    height: 17px;
    background: linear-gradient(to bottom right, transparent 47%, #fff 48%, #fff 54%, transparent 55%) 0 0 / 10px 9px no-repeat;
}
.list__arrow {
    display: flex;
    align-items: center;
    justify-content: center;
    width: 33px;
    border: 1px solid #aaa;
    background-color: #ddd;
}
.list__tiles {
    margin: 0;
    padding: 0;
    list-style: none;
}

.tile {
    display: flex;
    height: 34px;
}
.tile__tab {
    display: flex;
    align-items: center;
    justify-content: center;
    width: 11px;
    padding-bottom: 1px;
    font: 9px var(--small-font);
    background:
        linear-gradient(to bottom right, transparent 47%, #fff 48%, #fff 54%, transparent 55%) 0 1px / 10px 9px no-repeat,
        linear-gradient(to top right, transparent 47%, #000 48%, #000 54%, transparent 55%) 0 24px / 9px 8px no-repeat,
        linear-gradient(#000, #000) 8px 32px / 3px 1px no-repeat;
}
.tile__box {
    display: flex;
    flex-direction: column;
    align-items: center;
    justify-content: flex-end;
    flex: 1;
    margin-bottom: 1px;
    border-top: 1px solid #000;
    border-left: 1px solid #000;
    border-bottom: 1px solid #fff;
    font: 10px/11px var(--small-font);
}
.tile__box--tool {
    border: 1px solid #000;
    box-shadow: inset 1px 1px #fff, inset -1px -1px #999;
}
.tile__icon {
    width: 26px;
    height: 18px;
}

.center {
    flex: 1;
    min-width: 0;
    display: flex;
    flex-direction: column;
}

.toolbar {
    display: flex;
    height: 28px;
    margin-left: -1px;
    padding: 1px 0 0 3px;
    border: 1px solid var(--line);
    border-width: 1px 0 1px 1px;
    background-color: var(--panel);
}
.tool {
    width: 24px;
    height: 23px;
    border: 1px solid transparent;
}
.tool svg {
    width: 24px;
    height: 23px;
    margin: -1px;
}
.tool--on {
    border-color: var(--on-border);
    background-color: var(--on-bg);
}

.status {
    display: flex;
    align-items: flex-start;
    margin-left: auto;
}
.status__stop {
    margin: 4px 5px 0 0;
}
.status__bars {
    width: 165px;
    margin-top: 1px;
}
.status__field {
    height: 14px;
    border: 1px solid white;
}
.status__line {
    height: 5px;
    margin-top: 3px;
    border-top: 1px solid #bbb;
    background-color: #888;
}
.status__labels {
    display: grid;
    grid-template-columns: 1fr 1fr;
    width: 48px;
    margin: 2px 6px 0 8px;
    font: 10px/12px var(--small-font);
}
.status__set {
    text-align: right;
}
.status__group {
    grid-column: span 2;
}

.stage {
    flex: 1;
    position: relative;
    overflow: hidden;
}
.stage__part {
    position: absolute;
    left: 670px;
    top: 119px;
    fill: none;
    stroke-width: 3;
}
.part__face {
    fill: rgba(140, 145, 140, 0.2);
}
.part__grid {
    stroke: #696b6f;
}
.part__hidden {
    stroke: #8a8a8a;
}
.part__edge {
    stroke: #ccc;
}
.part__axes {
    stroke: #ddd;
}
.part__arrows {
    stroke: #8e9498;
}
.part__origin {
    stroke: white;
    stroke-width: 6;
}
.part__letter {
    stroke: white;
    stroke-width: 5;
}
.stage__gnomon {
    position: absolute;
    left: 19px;
    bottom: 21px;
}

/* floating palettes */
.palette {
    position: absolute;
    padding: 2px 7px 7px;
    border: 1px solid #555;
    box-shadow: inset 0 0 0 1px #fff;
    background: linear-gradient(#bccbdb, #d6e2f0 32px);
}
.palette--plugins {
    left: 738px;
    top: 31px;
}
.palette--machining {
    left: 34px;
    bottom: 3px;
}
.palette__head {
    display: flex;
    align-items: center;
    gap: 2px;
    height: 24px;
    margin-bottom: 4px;
}
.palette__title {
    flex: 1;
    margin: 0;
    font-size: 12px;
    font-weight: normal;
}
.palette__pin {
    width: 20px;
    height: 18px;
    border: 1px solid #000;
    outline: 1px solid #0a78d0;
    outline-offset: -2px;
    background-color: #eee;
}
.palette__control {
    display: flex;
    align-items: center;
    justify-content: center;
    width: 20px;
    height: 18px;
    border: 1px solid #7d92ab;
    border-radius: 2px;
    background: linear-gradient(#cfdcec 50%, #b3c5da 50%);
    box-shadow: inset 0 0 0 1px #dce8f5;
    fill: #fff;
    stroke: #555c68;
}
.palette__close {
    width: 16px;
    height: 16px;
    margin-left: 2px;
    background-color: #c75050;
    color: white;
    font: bold 11px/12px var(--ui-font);
}
.palette__body {
    padding: 2px;
    background-color: var(--panel);
}
.palette__row {
    display: flex;
    gap: 4px;
}
.palette__row--tight {
    gap: 2px;
    padding: 1px;
}
.palette__row--actions {
    gap: 2px;
    padding: 4px 0 1px 1px;
}
.palette__spacer {
    flex: 1;
}

.plugin {
    width: 33px;
    height: 33px;
    border: 1px solid #adadad;
    background-color: #e1e1e1;
}
.plugin svg {
    width: 33px;
    height: 33px;
    margin: -1px;
}
.plugin--on {
    border: 2px solid #0078d7;
}
.plugin--on svg {
    margin: -2px;
}
.palette--machining .plugin,
.palette--machining .plugin svg {
    width: 32px;
    height: 32px;
}

.mini {
    width: 14px;
    height: 15px;
    border: 1px solid #aaa;
    background-color: #e1e1e1;
}
.mini svg {
    width: 14px;
    height: 15px;
    margin: -1px;
}
.mini--on {
    border-color: #0050a0;
    background-color: #cce4f7;
}
.mini--dark {
    background-color: #ccc;
}

.action {
    width: 50px;
    height: 15px;
    border: 1px solid #adadad;
    background-color: #e1e1e1;
    font: bold 10px/12px "DejaVu Sans", sans-serif;
    white-space: nowrap;
}
.action:disabled {
    border-color: #bfbfbf;
    background-color: #ccc;
    color: #838383;
    text-shadow: 1px 1px #fff;
}

.tools {
    display: grid;
    grid-template-columns: 24px 24px;
    row-gap: 1px;
    padding: 2px 2px 4px 2px;
    border: 1px solid var(--line);
    border-right: 0;
    background-color: var(--panel);
}

.trash {
    width: 50px;
    margin-top: auto;
    padding: 3px;
    background-color: var(--panel);
}
.trash__button {
    display: flex;
    align-items: center;
    justify-content: center;
    width: 100%;
    height: 22px;
    border: 1px solid #bbb;
    background-color: #ccc;
}

.taskbar {
    display: flex;
    height: 30px;
    background-color: #020408;
    color: white;
}
.task {
    display: flex;
    align-items: center;
    justify-content: center;
    width: 36px;
    border-bottom: 2px solid transparent;
}
.task--open {
    width: 28px;
    margin: 0 4px 0 5px;
    border-color: #76b9ed;
}
.task--open:nth-of-type(5) {
    margin-left: 7px;
}
.task--current {
    border-color: #76b9ed;
    background-color: #35373b;
}
.tray {
    display: flex;
    align-items: center;
    margin-left: auto;
    margin-right: 4px;
    border-right: 1px solid #777;
}
.tray__item {
    display: flex;
    justify-content: center;
    width: 24px;
}
.tray__text {
    width: 38px;
}
.tray__text--clock {
    width: 62px;
}
```
